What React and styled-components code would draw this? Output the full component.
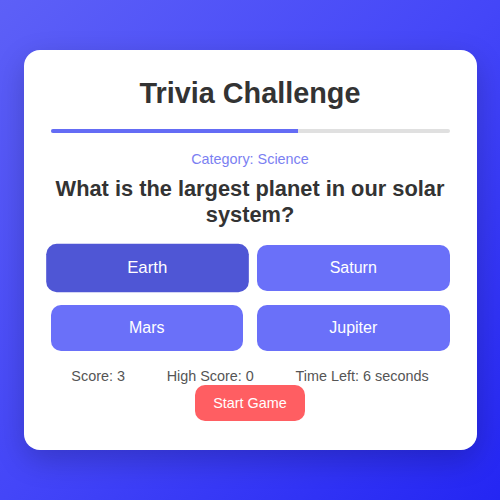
import React from "react";
import styled, { createGlobalStyle } from "styled-components";

const GlobalStyle = createGlobalStyle`
  html, body {
    margin: 0;
    padding: 0;
  }
  body {
    font-family: "Liberation Sans", Arial, sans-serif;
    background: linear-gradient(135deg, #5d60f7 0%, #4446f8 50%, #2426f3 100%);
    min-height: 100vh;
  }
`;

const Page = styled.div`
  min-height: 500px;
  display: flex;
  align-items: center;
  justify-content: center;
`;

const Card = styled.div`
  width: 453px;
  box-sizing: border-box;
  padding: 27px 27px 29px;
  background: #fff;
  border-radius: 16px;
  box-shadow: 0 10px 30px rgba(0, 0, 0, 0.2);
  text-align: center;
`;

const Title = styled.h1`
  margin: 0;
  font-size: 28.8px;
  line-height: 32px;
  font-weight: bold;
  color: #333;
`;

const Track = styled.div`
  margin-top: 20px;
  height: 4px;
  border-radius: 2px;
  background: #e0e0e0;
  overflow: hidden;
`;

const Fill = styled.div`
  height: 100%;
  background: #646cf5;
`;

const Category = styled.div`
  margin-top: 18px;
  font-size: 14.4px;
  line-height: 16px;
  color: #7b7ff2;
`;

const Question = styled.h2`
  margin: 9px 0 0;
  font-size: 21.8px;
  line-height: 26px;
  font-weight: bold;
  color: #333;
`;

const Answers = styled.div`
  margin-top: 17px;
  display: grid;
  grid-template-columns: 1fr 1fr;
  gap: 14px;
`;

const Answer = styled.button`
  height: 46px;
  border: none;
  border-radius: 10px;
  background: ${p => (p.selected ? "#4f56d5" : "#6a70f9")};
  color: #fff;
  font-family: inherit;
  font-size: 16px;
  transform: ${p => (p.selected ? "scale(1.05)" : "none")};
`;

const Stats = styled.div`
  margin-top: 16px;
  display: flex;
  justify-content: space-around;
  font-size: 14.4px;
  line-height: 18px;
  color: #555;
`;

const StartButton = styled.button`
  padding: 10px 18px;
  border: none;
  border-radius: 10px;
  background: #ff5e62;
  color: #fff;
  font-family: inherit;
  font-size: 14.4px;
`;

const answers = ["Earth", "Saturn", "Mars", "Jupiter"];

export default function App() {
  const progress = 62;
  return (
    <>
      <GlobalStyle />
      <Page>
        <Card>
          <Title>Trivia Challenge</Title>
          <Track>
            <Fill style={{ width: `${progress}%` }} />
          </Track>
          <Category>Category: Science</Category>
          <Question>What is the largest planet in our solar system?</Question>
          <Answers>
            {answers.map(a => (
              <Answer key={a} selected={a === "Earth"}>{a}</Answer>
            ))}
          </Answers>
          <Stats>
            <span>Score: 3</span>
            <span>High Score: 0</span>
            <span>Time Left: 6 seconds</span>
          </Stats>
          <StartButton>Start Game</StartButton>
        </Card>
      </Page>
    </>
  );
}
